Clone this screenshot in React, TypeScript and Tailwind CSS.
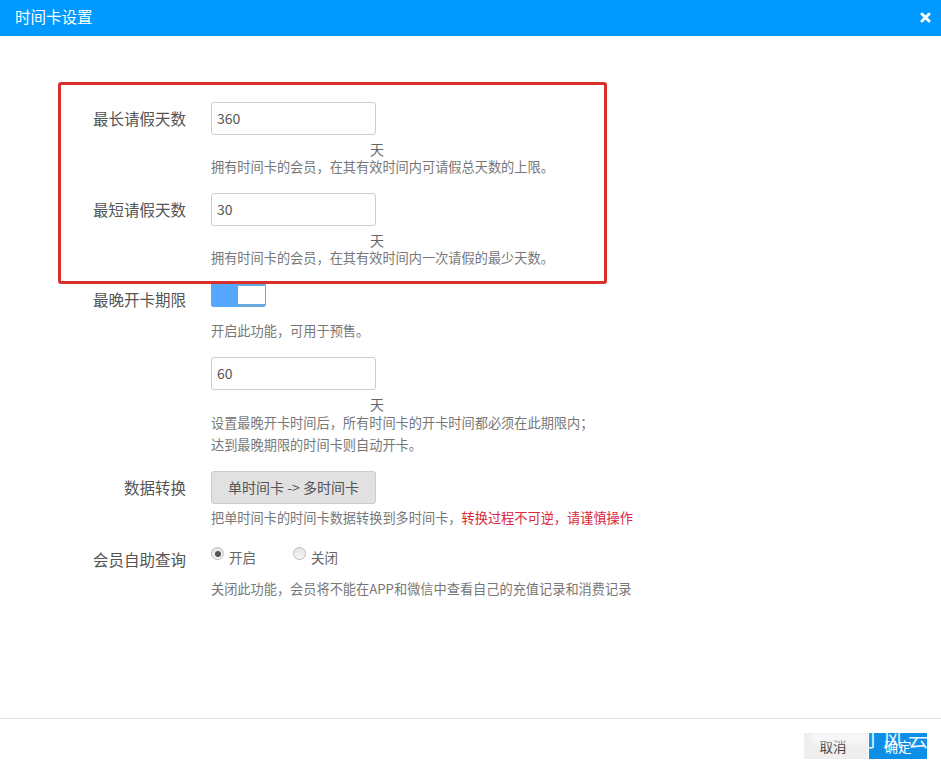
import { ReactNode } from 'react';

const font = { fontFamily: '"Noto Sans CJK SC", "Liberation Sans", sans-serif' };

function Row({ label, children, className = '' }: { label: string; children: ReactNode; className?: string }) {
  return (
    <div className={`flex items-start ${className}`}>
      <div className="w-[186px] shrink-0 text-right text-[15.5px] leading-[33px] text-[#555]">{label}</div>
      <div className="ml-[25px] flex-1">{children}</div>
    </div>
  );
}

function DaysInput({ value, className = '' }: { value: string; className?: string }) {
  return (
    <div className={className}>
      <input
        readOnly
        value={value}
        className="block h-[33px] w-[165px] rounded-[3px] border border-[#ccc] bg-white pb-[2px] pl-[5px] text-[14px] text-[#555] outline-none"
      />
      <div className="mt-[6px] pl-[159px] text-[14px] leading-[16px] text-[#666]">天</div>
    </div>
  );
}

function Help({ children, className = '' }: { children: ReactNode; className?: string }) {
  return <p className={`text-[13.2px] leading-[20px] text-[#777] ${className}`}>{children}</p>;
}

function Radio({ on, label, className = '' }: { on?: boolean; label: string; className?: string }) {
  return (
    <div className={`flex items-start ${className}`}>
      <span className="mt-[4px] flex h-[13px] w-[13px] items-center justify-center rounded-full border border-[#bbb] bg-gradient-to-b from-[#e4e4e4] to-[#f8f8f8]">
        {on && <span className="h-[6px] w-[6px] rounded-full bg-[#555]" />}
      </span>
      <span className="ml-[5px] text-[13.5px] leading-[28px] text-[#666]">{label}</span>
    </div>
  );
}

export default function App() {
  return (
    <div className="relative flex h-screen flex-col overflow-hidden bg-white" style={font}>
      <header className="flex h-9 shrink-0 items-center justify-between bg-[#0099ff] pb-[2px] pl-[15px] pr-[10px] text-white">
        <span className="text-[15.5px]">时间卡设置</span>
        <svg width="11" height="11" viewBox="0 0 11 11" fill="none">
          <path d="M2 2l7 7M9 2l-7 7" stroke="#fff" strokeWidth="3" strokeLinecap="round" />
        </svg>
      </header>

      <main className="flex-1 pt-[66px]">
        <Row label="最长请假天数">
          <DaysInput value="360" />
          <Help>拥有时间卡的会员，在其有效时间内可请假总天数的上限。</Help>
        </Row>

        <Row label="最短请假天数" className="mt-[16px]">
          <DaysInput value="30" />
          <Help>拥有时间卡的会员，在其有效时间内一次请假的最少天数。</Help>
        </Row>

        <Row label="最晚开卡期限" className="mt-[15px]">
          <div className="flex h-6 w-[55px] overflow-hidden rounded-[3px] bg-[#6aa8e0]">
            <div className="w-[27px] bg-[#55a8ff]" />
            <div className="mb-[3px] mr-px mt-[3px] flex-1 bg-white" />
          </div>
          <Help className="mt-[14px]">开启此功能，可用于预售。</Help>
          <DaysInput value="60" className="mt-[16px]" />
          <div className="text-[13.2px] leading-[22px] text-[#777]">
            <p>设置最晚开卡时间后，所有时间卡的开卡时间都必须在此期限内；</p>
            <p>达到最晚期限的时间卡则自动开卡。</p>
          </div>
        </Row>

        <Row label="数据转换" className="mt-[15px]">
          <button className="block h-[33px] w-[165px] rounded-[3px] border border-[#ccc] bg-[#e1e1e1] text-[14px] text-[#555]">
            单时间卡 -&gt; 多时间卡
          </button>
          <Help className="mt-[4px]">
            把单时间卡的时间卡数据转换到多时间卡，<span className="text-[#d9283c]">转换过程不可逆，请谨慎操作</span>
          </Help>
        </Row>

        <Row label="会员自助查询" className="mt-[15px]">
          <div className="flex">
            <Radio on label="开启" />
            <Radio label="关闭" className="ml-[37px]" />
          </div>
          <Help className="mt-[8px]">关闭此功能，会员将不能在APP和微信中查看自己的充值记录和消费记录</Help>
        </Row>
      </main>

      <footer className="flex h-[46px] shrink-0 items-start justify-end border-t border-[#e5e5e5] pr-[14px] pt-[14px] text-[13.5px]">
        <button className="h-[26px] w-[64px] bg-[#eeeeee] pr-[6px] text-[#444]">取消</button>
        <button className="ml-px h-[26px] w-[58px] bg-[#0d8fe8] text-white">确定</button>
      </footer>

      {/* annotation drawn over the screenshot */}
      <div className="pointer-events-none absolute left-[58px] top-[82px] h-[202px] w-[549px] rounded-[3px] border-[3px] border-[#d9302b]" />
      {/* watermark */}
      <div className="pointer-events-none absolute left-[810px] top-[732px] h-[12px] w-[58px] bg-white/50 blur-[2px]" />
      <div className="pointer-events-none absolute left-[868px] top-[727px] w-[62px] overflow-hidden">
        <div className="ml-[-10px] whitespace-nowrap text-[20px] leading-[24px] tracking-[5px] text-white/90">打风云</div>
      </div>
    </div>
  );
}
